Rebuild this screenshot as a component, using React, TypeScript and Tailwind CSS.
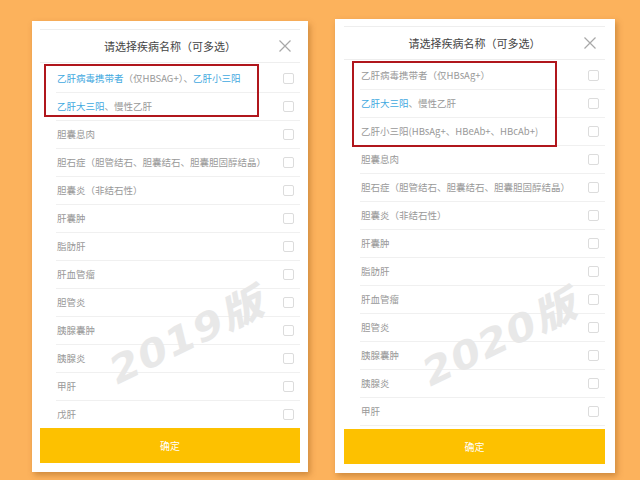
import React from 'react';

type Seg = { t: string; blue?: boolean };
type Row = Seg[];

const left: Row[] = [
  [{ t: '乙肝病毒携带者', blue: true }, { t: '（仅HBSAG+）、' }, { t: '乙肝小三阳', blue: true }],
  [{ t: '乙肝大三阳', blue: true }, { t: '、慢性乙肝' }],
  [{ t: '胆囊息肉' }],
  [{ t: '胆石症（胆管结石、胆囊结石、胆囊胆固醇结晶）' }],
  [{ t: '胆囊炎（非结石性）' }],
  [{ t: '肝囊肿' }],
  [{ t: '脂肪肝' }],
  [{ t: '肝血管瘤' }],
  [{ t: '胆管炎' }],
  [{ t: '胰腺囊肿' }],
  [{ t: '胰腺炎' }],
  [{ t: '甲肝' }],
  [{ t: '戊肝' }],
];

const right: Row[] = [
  [{ t: '乙肝病毒携带者（仅HBsAg+）' }],
  [{ t: '乙肝大三阳', blue: true }, { t: '、慢性乙肝' }],
  [{ t: '乙肝小三阳(HBsAg+、HBeAb+、HBcAb+)' }],
  [{ t: '胆囊息肉' }],
  [{ t: '胆石症（胆管结石、胆囊结石、胆囊胆固醇结晶）' }],
  [{ t: '胆囊炎（非结石性）' }],
  [{ t: '肝囊肿' }],
  [{ t: '脂肪肝' }],
  [{ t: '肝血管瘤' }],
  [{ t: '胆管炎' }],
  [{ t: '胰腺囊肿' }],
  [{ t: '胰腺炎' }],
  [{ t: '甲肝' }],
];

function CloseIcon() {
  return (
    <svg width="12" height="12" viewBox="0 0 12 12" fill="none" stroke="#a8a8a8" strokeWidth="1.2">
      <path d="M0.5 0.5 L11.5 11.5 M11.5 0.5 L0.5 11.5" />
    </svg>
  );
}

function Panel({
  rows,
  mark,
  className,
  listH,
  headerPt,
  box,
  markPos,
}: {
  rows: Row[];
  mark: string;
  className: string;
  listH: string;
  headerPt: string;
  box: string;
  markPos: string;
}) {
  return (
    <div className={`relative bg-white shadow-[2px_3px_6px_rgba(120,60,0,0.35)] flex flex-col overflow-hidden ${className}`}>
      <div className={`flex flex-col ${headerPt}`}>
        <div className="relative h-[34px] flex items-center justify-center border-t border-b border-[#eeeeee]">
          <span className="text-[11px] text-[#444]">请选择疾病名称（可多选）</span>
          <div className="absolute right-[9px] top-1/2 -translate-y-1/2 flex">
            <CloseIcon />
          </div>
        </div>
      </div>
      <div className={`flex flex-col overflow-hidden pt-[2px] ${listH}`}>
        {rows.map((r, i) => (
          <div key={i} className="ml-4 h-[28px] shrink-0 flex items-center justify-between pl-px pr-[6px] border-b border-[#f0f0f0]">
            <span className="text-[9.5px] text-[#999] whitespace-nowrap">
              {r.map((s, j) => (
                <span key={j} className={s.blue ? 'text-[#3fa9e0]' : ''}>
                  {s.t}
                </span>
              ))}
            </span>
            <span className="w-[11px] h-[11px] rounded-[2px] border border-[#dcdcdc] shrink-0" />
          </div>
        ))}
      </div>
      <div className="h-[35px] bg-[#fdc100] flex items-center justify-center shrink-0">
        <span className="text-[10px] text-white">确定</span>
      </div>
      <div className={`absolute border-2 border-[#b0161c] pointer-events-none ${box}`} />
      <div
        className={`absolute -translate-x-1/2 -translate-y-1/2 -rotate-[26deg] scale-x-[1.12] text-[38px] font-black italic tracking-[1px] text-[#e8e8e8] whitespace-nowrap pointer-events-none ${markPos}`}
        style={{ fontFamily: '"DejaVu Sans", "Noto Sans CJK SC", sans-serif' }}
      >
        {mark}
      </div>
    </div>
  );
}

export default function App() {
  return (
    <div
      className="w-[640px] h-[480px] bg-[#fcb25c] flex items-start pl-8 gap-[27px] overflow-hidden"
      style={{ fontFamily: '"Noto Sans CJK SC", "Noto Sans", sans-serif' }}
    >
      <Panel
        rows={left}
        mark="2019版"
        className="mt-[21px] w-[276px] h-[451px] px-2 pb-[9px]"
        listH="h-[365px]"
        headerPt="pt-2"
        box="left-[12px] top-[43px] w-[215px] h-[53px]"
        markPos="left-[155px] top-[316px]"
      />
      <Panel
        rows={right}
        mark="2020版"
        className="mt-[19px] w-[280px] h-[454px] pl-[9px] pr-[10px] pb-[9px]"
        listH="h-[369px]"
        headerPt="pt-[7px]"
        box="left-[17px] top-[42px] w-[205px] h-[86px]"
        markPos="left-[165px] top-[320px]"
      />
    </div>
  );
}
